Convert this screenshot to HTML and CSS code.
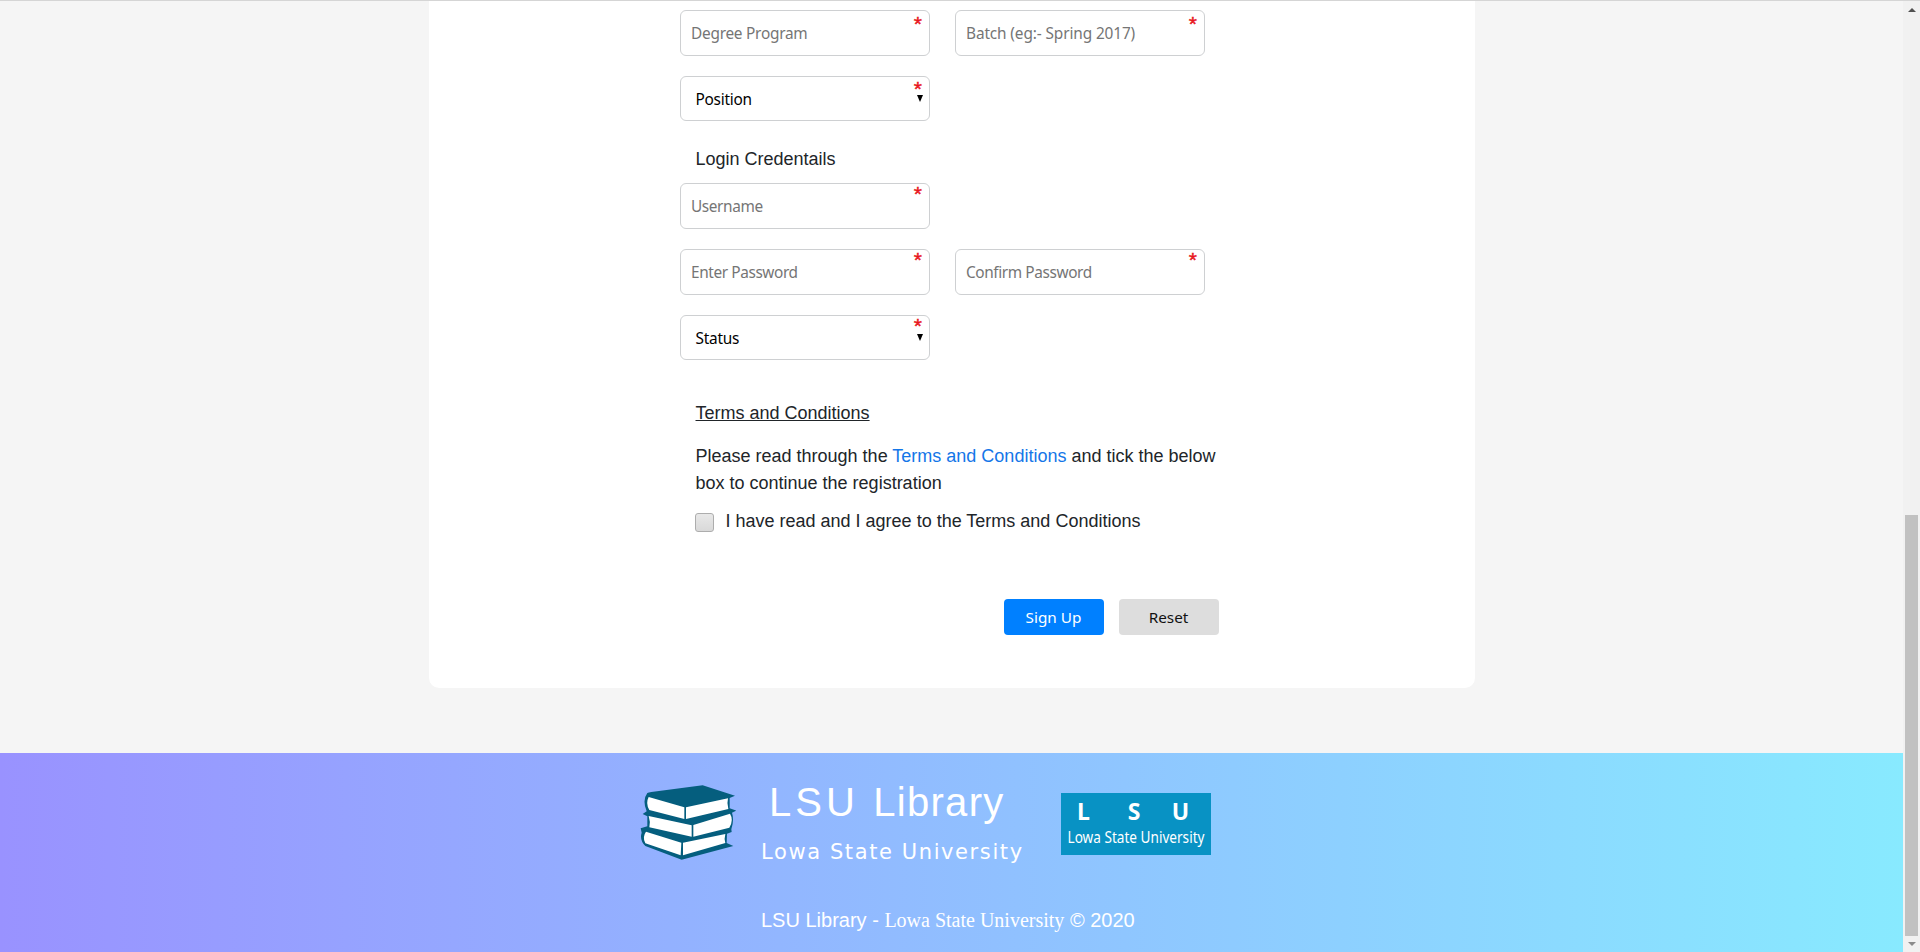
FILE: index.html
```html
<!DOCTYPE html>
<html lang="en">
<head>
<meta charset="utf-8">
<title>LSU Library</title>
<link rel="stylesheet" href="styles.css">
</head>
<body>
<div class="screen">
  <div class="page">
    <main class="main">
      <form class="card">
        <div class="row">
          <div class="field"><span class="hint">Degree Program</span><span class="star">*</span></div>
          <div class="field"><span class="hint wide">Batch (eg:- Spring 2017)</span><span class="star">*</span></div>
        </div>
        <div class="row">
          <div class="field select"><span class="value">Position</span><span class="star">*</span><span class="caret"></span></div>
        </div>
        <h2 class="heading">Login Credentails</h2>
        <div class="row">
          <div class="field"><span class="hint tight">Username</span><span class="star high">*</span></div>
        </div>
        <div class="row">
          <div class="field"><span class="hint tight">Enter Password</span><span class="star high">*</span></div>
          <div class="field"><span class="hint tight">Confirm Password</span><span class="star high">*</span></div>
        </div>
        <div class="row">
          <div class="field select"><span class="value">Status</span><span class="star higher">*</span><span class="caret"></span></div>
        </div>
        <h2 class="terms-title">Terms and Conditions</h2>
        <p class="terms">Please read through the <a class="link">Terms and Conditions</a> and tick the below<br>box to continue the registration</p>
        <div class="agree"><span class="box"></span><span>I have read and I agree to the Terms and Conditions</span></div>
        <div class="actions"><span class="btn primary">Sign Up</span><span class="btn">Reset</span></div>
      </form>
    </main>
    <footer class="footer">
      <div class="brand">
        <svg class="books" viewBox="60 72 288 228">
          <path fill="#055e7e" d="M82 99 Q86 97 94 96 L248 76 L345 107 L329 114 L329 145 L349 152 L336 158 Q343 180 334 208 L335 216 L321 221 L320 249 L340 258 L185 299 L76 258 Q58 240 65 218 L62 205 L82 199 L82 169 L68 162 L80 154 Q66 120 82 99Z"/>
          <path fill="#fff" d="M86 111 L193 142 L193 177 L88 150 Q76 130 86 111Z M198 142 L324 115 Q320 130 325 147 L198 177Z M86 168 L215 196 L215 230 L88 202 Q92 186 86 168Z M220 195 L330 161 Q342 180 328 203 L220 230Z M78 215 L184 248 L182 286 L76 250 Q66 231 78 215Z M189 248 L316 222 Q312 236 316 249 L189 286Z"/>
        </svg>
        <div class="names">
          <div class="name"><span class="lsu">LSU</span> Library</div>
          <div class="sub">Lowa State University</div>
        </div>
        <div class="badge">
          <div class="letters"><span>L</span><span>S</span><span>U</span></div>
          <div class="badge-sub">Lowa State University</div>
        </div>
      </div>
      <div class="copy">LSU Library - <span class="serif">Lowa State University</span> © 2020</div>
    </footer>
  </div>
  <div class="scrollbar"><span class="up"></span><span class="thumb"></span><span class="down"></span></div>
</div>
</body>
</html>
```
FILE: styles.css
```css
* { box-sizing: border-box; }
body { margin: 0; font-family: "Liberation Sans", Arial, sans-serif; font-size: 18px; color: #212529; }
.screen { display: flex; width: 1920px; height: 952px; overflow: hidden; border-top: 1px solid #d5d5d5; }
.page { width: 1903px; height: 951px; background: #f5f5f5; }
.main { height: 752px; padding-left: 429px; }
.card { width: 1046px; height: 687px; background: #fff; border-radius: 0 0 10px 10px; padding: 9px 0 0 251px; }
.row { display: flex; gap: 25px; margin-bottom: 20px; }
.field { position: relative; width: 250px; height: 46px; border: 1px solid #ced0d2; border-radius: 6px; padding: 1px 10px 0; display: flex; align-items: center; font-family: "Noto Sans", sans-serif; font-size: 15.4px; letter-spacing: -0.25px; white-space: nowrap; background: #fff; }
.select { height: 45px; padding: 2px 0 0 14.5px; color: #000; }
.hint { color: #757575; }
.wide { letter-spacing: -0.12px; }
.tight { letter-spacing: -0.4px; }
.star { position: absolute; right: 7px; top: 0; font: 21px/26px "Liberation Sans", sans-serif; color: #e8141c; -webkit-text-stroke: 0.4px #e8141c; letter-spacing: 0; }
.high { top: -3px; }
.select .star { top: -1px; }
.select .higher { top: -3px; }
.caret { position: absolute; right: 6px; top: 18px; border-left: 3px solid transparent; border-right: 3px solid transparent; border-top: 7px solid #000; }
.heading, .terms-title { font-size: 18px; font-weight: 400; line-height: 27px; margin: 0 0 0 15.5px; }
.heading { padding: 5px 0 10px; }
.terms-title { margin-top: 40px; text-decoration: underline; text-decoration-thickness: 1px; }
.terms { margin: 16px 0 0 15.5px; line-height: 27px; white-space: nowrap; }
.link { color: #1476e8; }
.agree { display: flex; margin: 11px 0 0 15px; line-height: 27px; gap: 11.5px; }
.box { width: 19px; height: 19px; margin-top: 5px; border: 1px solid #adadad; border-radius: 3px; background: linear-gradient(#e8e8e8, #d9d9d9); }
.actions { display: flex; gap: 15px; margin: 64px 0 0 323.5px; }
.btn { width: 100px; height: 36px; border-radius: 4px; background: #ddd; color: #111; font: 15.3px/36px "Noto Sans", sans-serif; text-align: center; }
.primary { background: #0080ff; color: #fff; }
.footer { height: 199px; background: linear-gradient(90deg, #9992ff, #88eaff); color: #fff; padding: 31px 0 0 640px; }
.brand { display: flex; height: 90px; }
.books { width: 96px; height: 76px; flex: none; }
.names { width: 325px; padding-left: 25px; white-space: nowrap; }
.name { font-size: 40px; line-height: 44px; margin: -4px 0 0 8px; letter-spacing: 1.3px; word-spacing: 2px; }
.lsu { letter-spacing: 4px; }
.sub { font: 21px/26px "DejaVu Sans", sans-serif; letter-spacing: 1.6px; margin-top: 15px; }
.badge { width: 150px; height: 62px; margin-top: 9px; background: #0892c4; font-family: "Noto Sans", sans-serif; white-space: nowrap; }
.letters { display: grid; grid-template-columns: 45px 56px 37px; text-align: center; font-size: 23px; line-height: 26px; font-weight: 700; padding-top: 5px; }
.badge-sub { width: 150px; display: flex; justify-content: center; font-size: 17px; line-height: 26px; transform: scaleX(0.8); }
.copy { margin: 32px 0 0 121px; font-size: 20px; line-height: 28px; white-space: nowrap; }
.serif { font-family: "Liberation Serif", serif; }
.scrollbar { width: 17px; height: 951px; background: #f1f1f1; display: flex; flex-direction: column; align-items: center; }
.up { border: 4px solid transparent; border-top: 0; border-bottom: 4px solid #505050; margin-top: 7px; }
.thumb { width: 13px; height: 421px; background: #c1c1c1; margin-top: 503px; }
.down { border: 4px solid transparent; border-bottom: 0; border-top: 4px solid #8b8b8b; margin-top: 6px; }
```
